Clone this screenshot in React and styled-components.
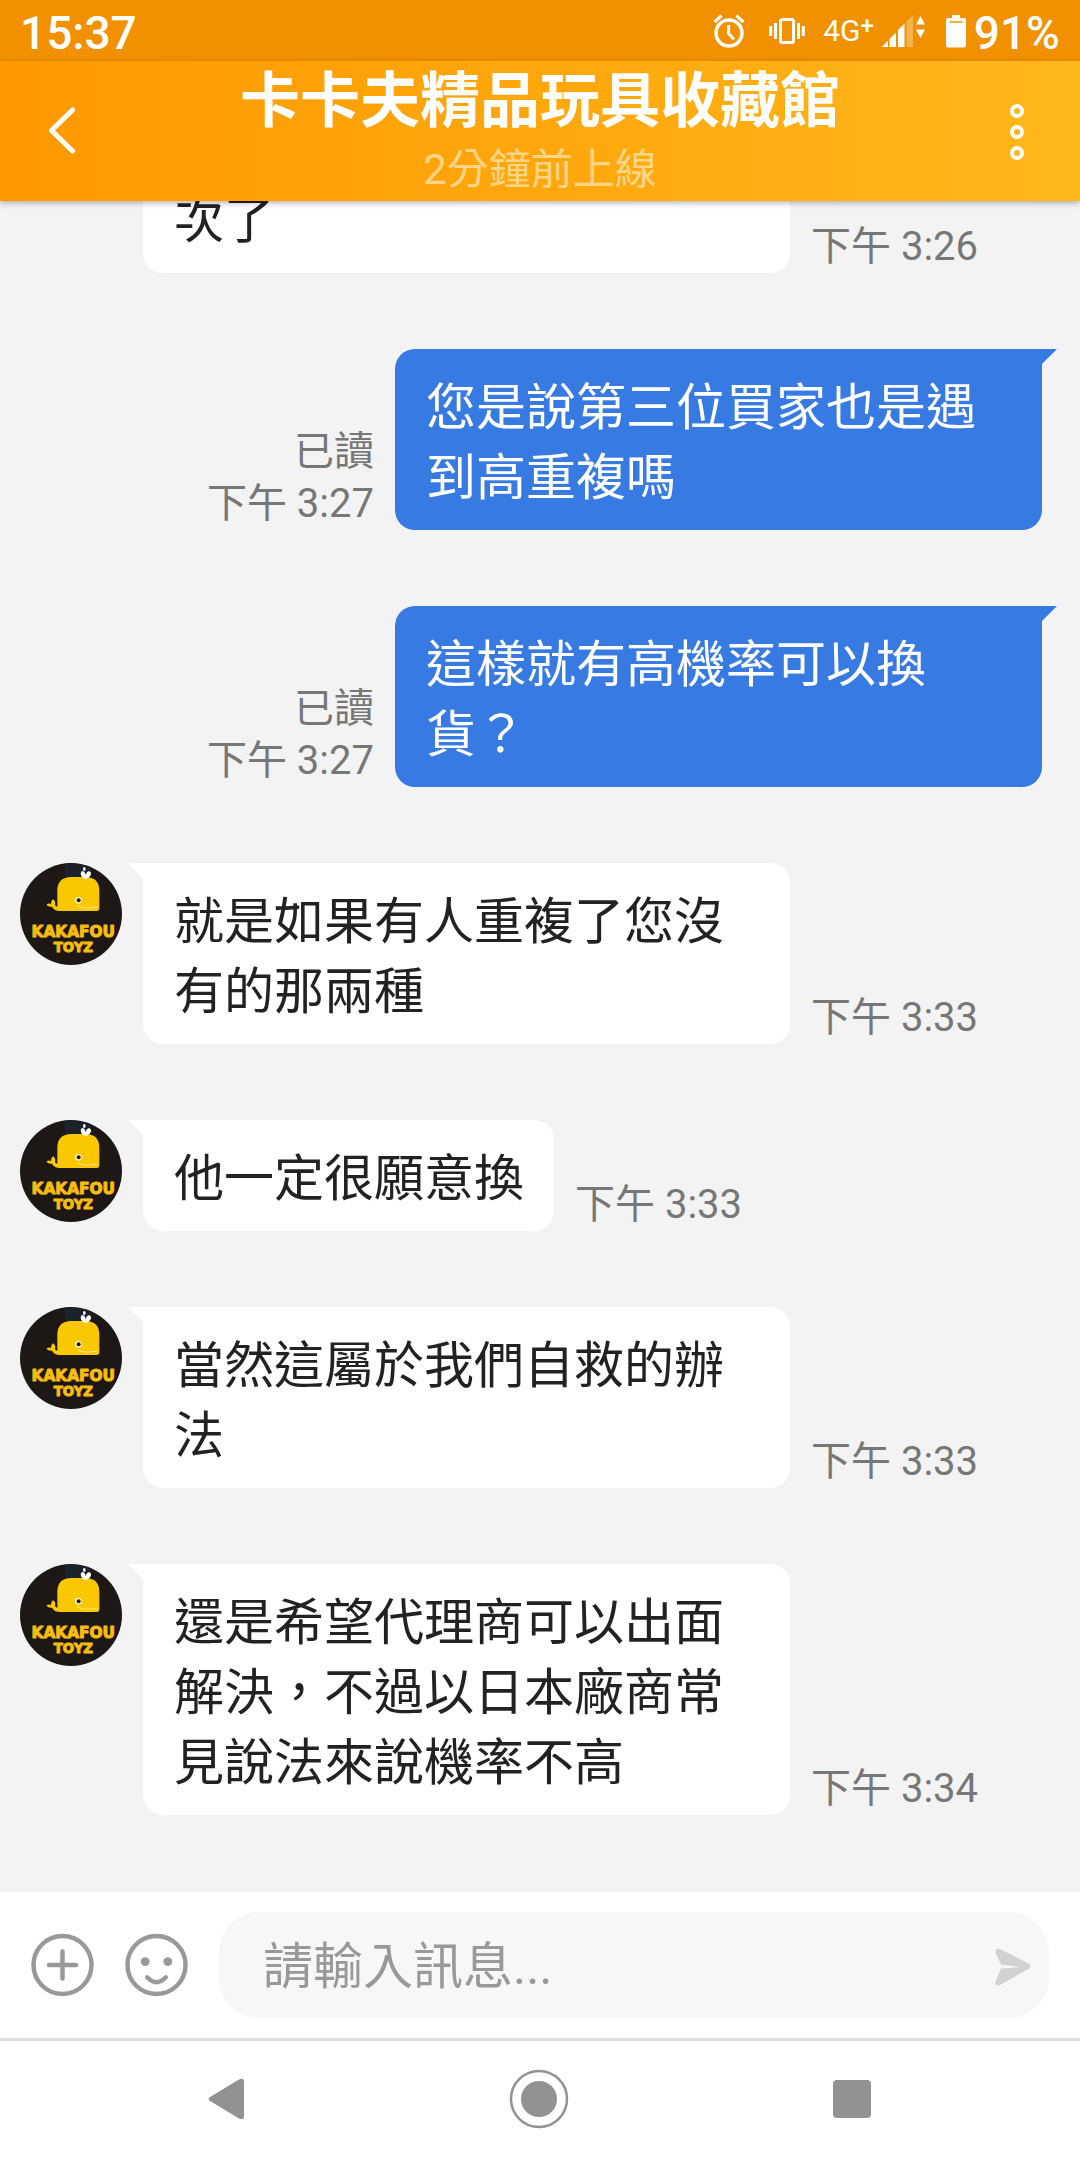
import styled, { createGlobalStyle } from 'styled-components'

const GlobalStyle = createGlobalStyle`
  * {
    box-sizing: border-box;
  }

  body {
    margin: 0;
    background: #f3f3f3;
    font-family: Roboto, "Noto Sans CJK TC", sans-serif;
  }

  button {
    padding: 0;
    border: 0;
    background: none;
    cursor: pointer;
  }

  svg {
    display: block;
    flex: none;
  }
`

const Screen = styled.div`
  display: flex;
  flex-direction: column;
  height: 100vh;
  overflow: hidden;
`

const StatusBar = styled.div`
  display: flex;
  flex: none;
  align-items: center;
  justify-content: space-between;
  height: 61px;
  padding: 0 20px;
  background: #f29100;
  color: #fff;
`

const StatusText = styled.span`
  padding-top: 4px;
  font-size: 46px;
  font-weight: 500;
  line-height: 54px;
`

const StatusIcons = styled.div`
  display: flex;
  align-items: center;
  gap: 8px;
`

const StatusIcon = styled.span`
  margin-right: ${p => p.$space || 0}px;
`

const Network = styled.span`
  display: flex;
  align-items: flex-start;
  font-size: 30px;
  line-height: 30px;
`

const NetworkPlus = styled.sup`
  font-size: 24px;
  font-weight: 500;
  line-height: 20px;
`

const Header = styled.header`
  position: relative;
  z-index: 1;
  display: flex;
  align-items: center;
  justify-content: space-between;
  height: 140px;
  flex: none;
  background: linear-gradient(90deg, #ff9800, #ffb71a);
  box-shadow: 0 2px 6px rgba(0, 0, 0, 0.3);
  color: #fff;
`

const HeaderButton = styled.button`
  display: flex;
  align-items: center;
  justify-content: center;
  width: 126px;
  height: 140px;
  color: #fff;
`

const Titles = styled.div`
  display: flex;
  flex-direction: column;
  align-items: center;
  height: 140px;
  padding-top: 3px;
`

const Title = styled.h1`
  margin: 0;
  font-size: 60px;
  font-weight: 700;
  line-height: 76px;
`

const LastSeen = styled.p`
  margin: 0;
  color: #ffd588;
  font-size: 42px;
  font-weight: 400;
  line-height: 60px;
`

const MessageList = styled.main`
  display: flex;
  flex: 1;
  flex-direction: column;
  justify-content: flex-end;
  gap: 76px;
  min-height: 0;
  padding-bottom: 77px;
  overflow: hidden;
`

const Row = styled.div`
  display: flex;
  flex: none;
  flex-direction: ${p => (p.$mine ? 'row-reverse' : 'row')};
  align-items: flex-start;
  gap: 21px;
  padding: 0 38px 0 20px;
`

const AvatarSlot = styled.div`
  flex: none;
  width: 102px;
`

const Bubble = styled.div`
  position: relative;
  flex: none;
  width: ${p => (p.$wide ? 'calc(60vw - 1px)' : 'auto')};
  max-width: calc(60vw - 1px);
  padding: 24px 30px 17px 31px;
  border-radius: ${p => (p.$mine ? '20px 0 20px 20px' : '0 20px 20px 20px')};
  background: ${p => (p.$mine ? '#367ae2' : '#fff')};
  color: ${p => (p.$mine ? '#fff' : '#222')};
  font-size: 50px;
  line-height: 70px;

  &::before {
    content: '';
    position: absolute;
    top: 0;
    ${p => (p.$mine ? 'left: 100%' : 'right: 100%')};
    width: 15px;
    height: 15px;
    background: inherit;
    clip-path: ${p => (p.$mine ? 'polygon(0 0, 100% 0, 0 100%)' : 'polygon(0 0, 100% 0, 100% 100%)')};
  }
`

const Meta = styled.div`
  align-self: flex-end;
  color: #777;
  font-size: 40px;
  line-height: 52px;
  text-align: ${p => (p.$mine ? 'right' : 'left')};
  white-space: nowrap;
`

const Composer = styled.form`
  display: flex;
  flex: none;
  align-items: center;
  gap: 31px;
  padding: 20px 31px;
  background: #fff;
`

const IconButton = styled.button`
  flex: none;
  color: #999;
`

const Field = styled.div`
  display: flex;
  flex: 1;
  align-items: center;
  height: 106px;
  padding: 0 18px 0 44px;
  border-radius: 40px;
  background: #f7f7f5;
`

const Input = styled.input`
  flex: 1;
  min-width: 0;
  padding: 4px 0 0;
  border: 0;
  outline: 0;
  background: none;
  color: #222;
  font-family: inherit;
  font-size: 50px;
  line-height: 70px;

  &::placeholder {
    color: #999;
    opacity: 1;
  }
`

const SendButton = styled.button`
  color: #d2d2d2;
`

const NavBar = styled.nav`
  display: grid;
  flex: none;
  grid-template-columns: repeat(3, 1fr);
  height: 122px;
  padding: 0 71px 4px 69px;
  border-top: 3px solid #dcdcdc;
  background: #fff;
`

const NavButton = styled.button`
  display: flex;
  align-items: center;
  justify-content: center;
  color: #929292;
`

const AlarmIcon = () => (
  <svg width="32" height="34" viewBox="0 0 32 34" fill="none" stroke="#fff">
    <circle cx="16" cy="19" r="13" strokeWidth="3.4" />
    <path d="M15.6 11v8.6l5.4 5.6" strokeWidth="3" />
    <path d="M1.5 8L8.6 1.6M30.5 8L23.4 1.6" strokeWidth="3.2" />
  </svg>
)

const VibrateIcon = () => (
  <svg width="36" height="28" viewBox="0 0 36 28" fill="none" stroke="#fff" strokeWidth="3">
    <rect x="11.5" y="2.5" width="13" height="23" rx="2" />
    <path d="M6.5 6v16M1.7 9v10M29.5 6v16M34.3 9v10" />
  </svg>
)

const SignalIcon = () => (
  <svg width="44" height="34" viewBox="0 0 44 34" fill="#fff">
    <path d="M0 33l6-6.500v6.500zM7.500 33v-8l6.500-6.500v14.500zM16 33V16l6.500-6.500V33z" />
    <path d="M24.500 33V7.500L31 1v32z" opacity="0.3" />
    <path d="M38.500 2l4.500 8.500h-9zM38.500 24l4.500-8.500h-9z" />
  </svg>
)

const BatteryIcon = () => (
  <svg width="20" height="34" viewBox="0 0 20 34">
    <path d="M6 1h8v3h4q2 0 2 2v25q0 2.500-2.500 2.500h-15Q0 33.500 0 31V6q0-2 2-2h4z" fill="#fff" />
    <path d="M3.500 8h13" stroke="#f29100" strokeWidth="1.500" />
  </svg>
)

const BackIcon = () => (
  <svg width="28" height="48" viewBox="0 0 28 48" fill="none" stroke="currentColor" strokeWidth="5" strokeLinecap="round" strokeLinejoin="round">
    <path d="M23.500 3L2.500 23.500 23.500 44" />
  </svg>
)

const MoreIcon = () => (
  <svg width="14" height="58" viewBox="0 0 14 58" fill="none" stroke="currentColor" strokeWidth="4">
    <circle cx="7" cy="9" r="5" />
    <circle cx="7" cy="30" r="5" />
    <circle cx="7" cy="51" r="5" />
  </svg>
)

const PlusIcon = () => (
  <svg width="63" height="64" viewBox="0 0 63 64" fill="none" stroke="currentColor" strokeWidth="4.500" strokeLinecap="round">
    <circle cx="31.500" cy="32" r="29" />
    <path d="M31.500 18.500v27M18 32h27" />
  </svg>
)

const SmileIcon = () => (
  <svg width="63" height="64" viewBox="0 0 64 64" fill="none" stroke="currentColor" strokeWidth="4.500" strokeLinecap="round">
    <circle cx="32" cy="32" r="29.500" />
    <circle cx="20.500" cy="28.500" r="4.500" fill="currentColor" stroke="none" />
    <circle cx="43.500" cy="28.500" r="4.500" fill="currentColor" stroke="none" />
    <path d="M22.500 44.500q9.500 10 19 0" />
  </svg>
)

const SendIcon = () => (
  <svg width="36" height="42" viewBox="0 -4 36 42" fill="currentColor">
    <path d="M.500 5C-.500 2 2 0 5 1l28.500 14.500q3.500 2.500 0 5.500L5 37C2 38 0 36.500.500 33.500L6 20.500 26 19 6 16.500z" />
  </svg>
)

const Avatar = () => (
  <svg width="102" height="102" viewBox="0 0 306 306" role="img" aria-label="KAKAFOU TOYZ">
    <circle cx="153" cy="153" r="153" fill="#1d1815" />
    <path d="M133 2q40-4 82 11l-8 28h-72z" fill="#1b222c" />
    <path d="M112 84q0-42 42-42h42q42 0 42 42v52q0 8-8 8H118q-14 0-22-13-15 1-16-7 6-5 13-1 0-11 7-14 8 6 5 18l7 5z" fill="#fac800" />
    <path d="M172 129q20 11 60 3" fill="none" stroke="#fde98a" strokeWidth="3" />
    <circle cx="175" cy="112" r="10" fill="#fff8d0" />
    <circle cx="176" cy="112" r="6" fill="#1d1815" />
    <path d="M197 48q-14-5-15-16 0-8 6-8 7 1 9 13 3-12 10-12 7 1 6 9-2 10-16 14z" fill="#fff" />
    <ellipse cx="193" cy="18" rx="4" ry="6" fill="#fff" />
    <g fill="#f5bd10" stroke="#f5bd10" strokeLinejoin="round" fontFamily="DejaVu Sans" fontWeight="700" textAnchor="middle">
      <text x="160" y="222" fontSize="46" strokeWidth="3">KAKAFOU</text>
      <text x="160" y="268" fontSize="40" strokeWidth="3">TOYZ</text>
    </g>
  </svg>
)

const messages = [
  { text: '次了', time: '下午 3:26', continued: true },
  { text: '您是說第三位買家也是遇到高重複嗎', time: '下午 3:27', mine: true },
  { text: '這樣就有高機率可以換貨？', time: '下午 3:27', mine: true },
  { text: '就是如果有人重複了您沒有的那兩種', time: '下午 3:33' },
  { text: '他一定很願意換', time: '下午 3:33' },
  { text: '當然這屬於我們自救的辦法', time: '下午 3:33' },
  { text: '還是希望代理商可以出面解決，不過以日本廠商常見說法來說機率不高', time: '下午 3:34' },
]

const Message = ({ text, time, mine, continued }) => (
  <Row $mine={mine}>
    {!mine && <AvatarSlot>{!continued && <Avatar />}</AvatarSlot>}
    <Bubble $mine={mine} $wide={continued}>{text}</Bubble>
    <Meta $mine={mine}>
      {mine && <div>已讀</div>}
      <div>{time}</div>
    </Meta>
  </Row>
)

const App = () => (
  <Screen>
    <GlobalStyle />
    <StatusBar>
      <StatusText>15:37</StatusText>
      <StatusIcons>
        <StatusIcon $space={16}><AlarmIcon /></StatusIcon>
        <StatusIcon $space={10}><VibrateIcon /></StatusIcon>
        <Network>4G<NetworkPlus>+</NetworkPlus></Network>
        <StatusIcon $space={12}><SignalIcon /></StatusIcon>
        <StatusIcon><BatteryIcon /></StatusIcon>
        <StatusText>91%</StatusText>
      </StatusIcons>
    </StatusBar>
    <Header>
      <HeaderButton type="button" aria-label="返回"><BackIcon /></HeaderButton>
      <Titles>
        <Title>卡卡夫精品玩具收藏館</Title>
        <LastSeen>2分鐘前上線</LastSeen>
      </Titles>
      <HeaderButton type="button" aria-label="更多"><MoreIcon /></HeaderButton>
    </Header>
    <MessageList>
      {messages.map((message, i) => <Message key={i} {...message} />)}
    </MessageList>
    <Composer onSubmit={e => e.preventDefault()}>
      <IconButton type="button" aria-label="新增"><PlusIcon /></IconButton>
      <IconButton type="button" aria-label="表情"><SmileIcon /></IconButton>
      <Field>
        <Input type="text" aria-label="訊息" placeholder="請輸入訊息..." />
        <SendButton type="submit" aria-label="傳送"><SendIcon /></SendButton>
      </Field>
    </Composer>
    <NavBar>
      <NavButton type="button" aria-label="上一頁">
        <svg width="36" height="42" viewBox="0 0 36 42" fill="currentColor">
          <path d="M31 1.500q5-2.500 5 2.500v34q0 5-5 2.500L2 23q-3-2 0-4z" />
        </svg>
      </NavButton>
      <NavButton type="button" aria-label="主畫面">
        <svg width="60" height="60" viewBox="0 0 60 60" fill="currentColor">
          <circle cx="30" cy="30" r="28" fill="none" stroke="currentColor" strokeWidth="2.500" />
          <circle cx="30" cy="30" r="18" />
        </svg>
      </NavButton>
      <NavButton type="button" aria-label="最近使用">
        <svg width="38" height="40" viewBox="0 0 38 40" fill="currentColor">
          <rect y="1" width="38" height="38" rx="4" />
        </svg>
      </NavButton>
    </NavBar>
  </Screen>
)

export default App
